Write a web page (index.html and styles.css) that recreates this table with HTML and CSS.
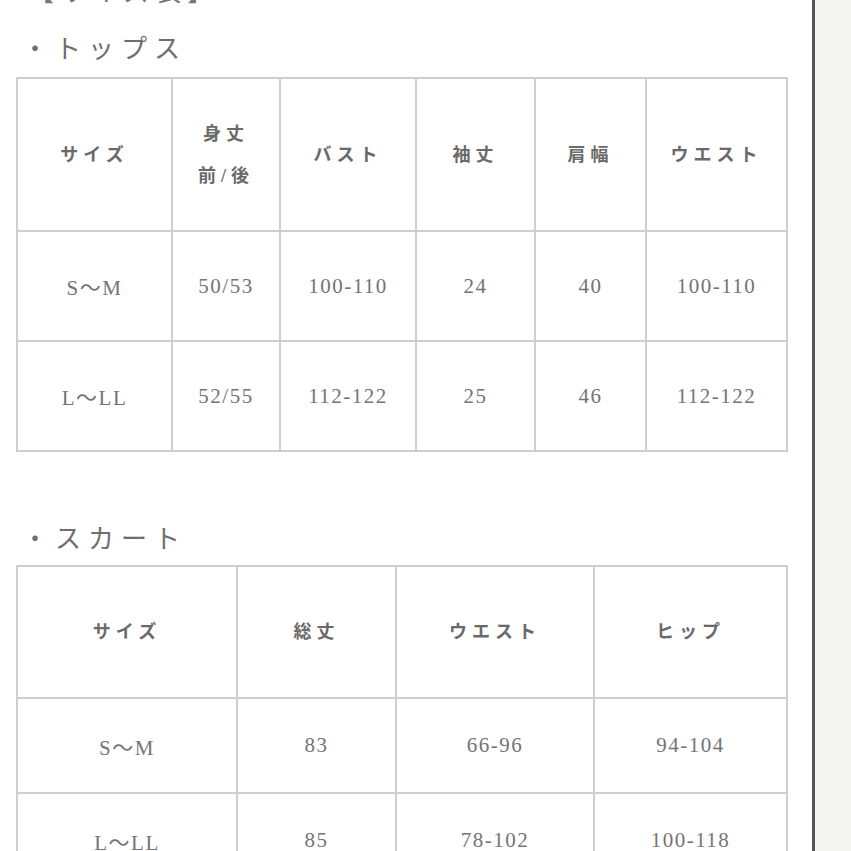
FILE: index.html
```html
<!DOCTYPE html>
<html lang="ja">
<head>
<meta charset="utf-8">
<title>サイズ表</title>
<link rel="stylesheet" href="styles.css">
</head>
<body>
<div class="page">
  <main class="content">
    <h1 class="title">【サイズ表】</h1>
    <h2 class="section">・トップス</h2>
    <table class="size tops">
      <colgroup>
        <col style="width:155px"><col style="width:108px"><col style="width:136px"><col style="width:119px"><col style="width:111px"><col style="width:141px">
      </colgroup>
      <tr class="head">
        <th>サイズ</th>
        <th class="two">身丈<br>前/後</th>
        <th>バスト</th>
        <th>袖丈</th>
        <th>肩幅</th>
        <th>ウエスト</th>
      </tr>
      <tr>
        <td>S～M</td><td>50/53</td><td>100-110</td><td>24</td><td>40</td><td>100-110</td>
      </tr>
      <tr>
        <td>L～LL</td><td>52/55</td><td>112-122</td><td>25</td><td>46</td><td>112-122</td>
      </tr>
    </table>

    <h2 class="section skirt">・スカート</h2>
    <table class="size skirts">
      <colgroup>
        <col style="width:220px"><col style="width:159px"><col style="width:198px"><col style="width:193px">
      </colgroup>
      <tr class="head">
        <th>サイズ</th>
        <th>総丈</th>
        <th>ウエスト</th>
        <th>ヒップ</th>
      </tr>
      <tr>
        <td>S～M</td><td>83</td><td>66-96</td><td>94-104</td>
      </tr>
      <tr>
        <td>L～LL</td><td>85</td><td>78-102</td><td>100-118</td>
      </tr>
    </table>
  </main>
  <div class="rail"></div>
</div>
</body>
</html>
```

FILE: styles.css
```css
html, body {
  margin: 0;
  padding: 0;
  background: #ffffff;
}

body {
  font-family: "Liberation Serif", "Noto Sans CJK JP", serif;
  color: #707070;
}

.page {
  display: flex;
  height: 851px;
  overflow: hidden;
}

.content {
  width: 812px;
  flex: none;
  padding-left: 16px;
  box-sizing: border-box;
}

.title {
  margin: -22px 0 0 12px;
  font-size: 26px;
  line-height: 30px;
  font-weight: normal;
  letter-spacing: 6px;
  color: #777;
}

.section {
  margin: 27px 0 12px 6px;
  font-size: 26px;
  line-height: 30px;
  font-weight: normal;
  letter-spacing: 7px;
  color: #6e6e6e;
}

.section.skirt {
  margin-top: 73px;
  margin-bottom: 10px;
}

.size {
  border-collapse: collapse;
  table-layout: fixed;
  width: 771px;
}

.size th,
.size td {
  border: 2px solid #cfcfcf;
  text-align: center;
  vertical-align: middle;
  padding: 0;
}

.size th {
  font-size: 18px;
  font-weight: bold;
  letter-spacing: 5px;
  color: #6a6a6a;
  line-height: 42px;
}

.size td {
  font-size: 21px;
  letter-spacing: 1.5px;
  color: #747474;
}

.tops .head th {
  height: 151px;
}

.tops td {
  height: 108px;
}

.skirts .head th {
  height: 130px;
}

.skirts td {
  height: 93px;
}

.rail {
  flex: 1;
  border-left: 3px solid #555555;
  background: #f4f4f2;
}
```
